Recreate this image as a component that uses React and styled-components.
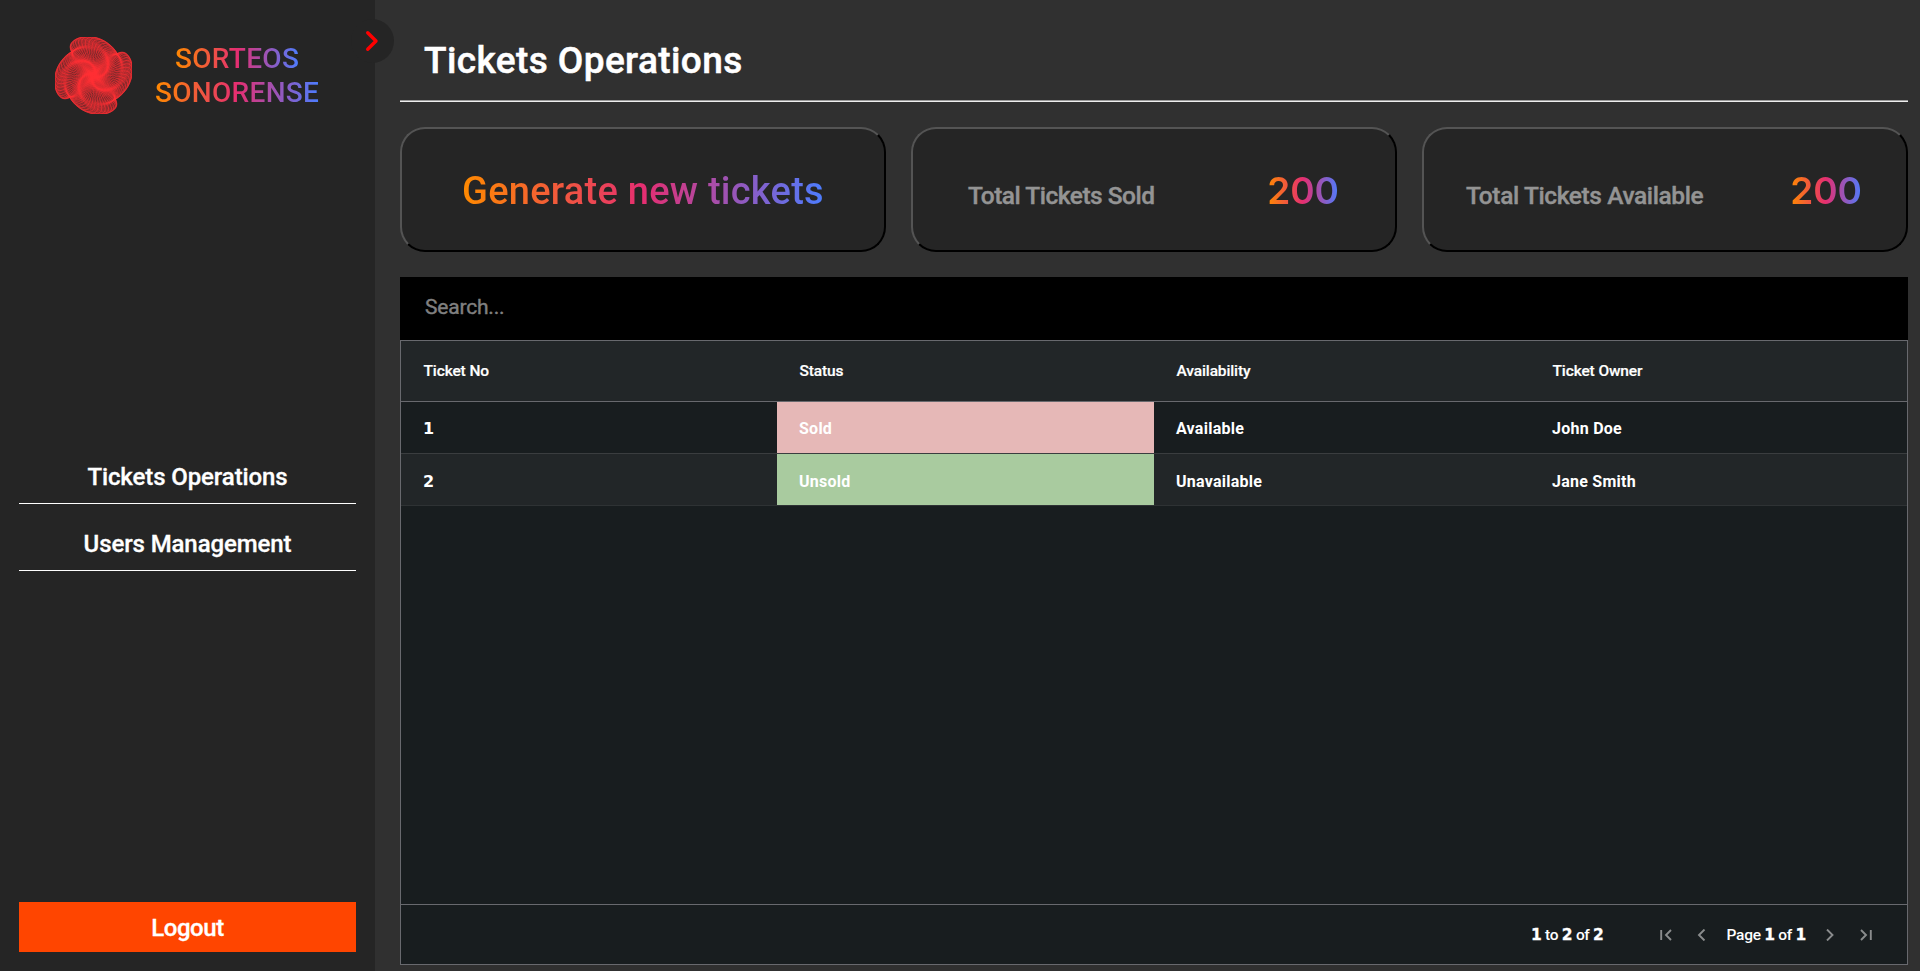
import React from "react";
import styled, { createGlobalStyle } from "styled-components";

const Global = createGlobalStyle`
  *{box-sizing:border-box}
  body{margin:0;background:#303030;color:#fff;font-family:Roboto,"Liberation Sans",sans-serif;font-weight:500;overflow:hidden}
`;

const gradient = "linear-gradient(to right, #ff8a00, #e52e71 50%, #4c7dff)";

const Page = styled.div`
  display: flex;
  height: 971px;
  width: 1920px;
`;
const Sidebar = styled.aside`
  position: relative;
  width: 375px;
  padding: 37px 19px 19px;
  background: #252525;
  display: flex;
  flex-direction: column;
  justify-content: space-between;
`;
const Toggle = styled.button`
  position: absolute;
  top: 19px;
  right: -19px;
  width: 43px;
  height: 44px;
  padding: 0 2px 0 0;
  border: 0;
  border-radius: 50%;
  background: #252525;
  display: flex;
  align-items: center;
  justify-content: center;
`;
const Brand = styled.div`
  display: flex;
  align-items: center;
  padding-left: 36px;
  gap: 23px;
`;
const Gradient = styled.span`
  display: block;
  width: max-content;
  background: ${gradient};
  background-clip: text;
  -webkit-background-clip: text;
  color: transparent;
  white-space: nowrap;
`;
const BrandName = styled.div`
  display: flex;
  flex-direction: column;
  align-items: center;
  font-size: 28px;
  line-height: 34px;
  letter-spacing: 0.3px;
`;
const Nav = styled.nav`
  display: flex;
  flex-direction: column;
  margin-bottom: 9px;
`;
const NavItem = styled.a`
  height: 67px;
  padding-top: 26.5px;
  border-bottom: 1px solid #fff;
  text-align: center;
  font-size: 24px;
  line-height: 28px;
  letter-spacing: -0.1px;
  -webkit-text-stroke: 0.3px;
`;
const Logout = styled.button`
  height: 50px;
  border: 0;
  background: #ff4500;
  color: #fff;
  padding-top: 3px;
  font: 500 24px Roboto, sans-serif;
  letter-spacing: -0.4px;
  -webkit-text-stroke: 0.3px;
`;
const Main = styled.main`
  flex: 1;
  padding: 0 12px 6px 25px;
  display: flex;
  flex-direction: column;
`;
const Title = styled.h1`
  margin: 0;
  height: 102px;
  padding: 39px 0 0 24px;
  font-size: 37px;
  line-height: 44px;
  font-weight: 500;
  letter-spacing: 0.4px;
  -webkit-text-stroke: 0.5px;
  border-bottom: 1px solid #eee;
  box-shadow: inset 0 -1px #9a9a9a;
`;
const Cards = styled.div`
  display: grid;
  grid-template-columns: repeat(3, 1fr);
  gap: 25px;
  height: 125px;
  margin: 25px 0;
`;
const Card = styled.section`
  border: 2px solid #000;
  border-color: #545454 #000 #000 #545454;
  border-radius: 25px;
  background: #252525;
  display: flex;
  align-items: baseline;
  justify-content: ${(p) => (p.$center ? "center" : "space-between")};
  padding: ${(p) => p.$pad || "0"};
  padding-top: 39px;
`;
const CardLabel = styled.span`
  font-size: 24.5px;
  color: #949494;
  letter-spacing: ${(p) => p.$ls}px;
  -webkit-text-stroke: 0.4px;
`;
const CardAction = styled(Gradient)`
  font-size: 38px;
  line-height: 46px;
  letter-spacing: 0.25px;
`;
const CardValue = styled(Gradient)`
  font: 600 37px/46px Inter, sans-serif;
`;
const Search = styled.input`
  height: 63px;
  flex: none;
  border: 0;
  background: #000;
  padding: 0 25px 3px;
  font: 400 21px Roboto, sans-serif;
  letter-spacing: -0.2px;
  &::placeholder {
    color: #808080;
    opacity: 1;
    -webkit-text-stroke: 0.4px;
  }
`;
const Grid = styled.div`
  flex: 1;
  border: 1px solid #68696e;
  background: #181d1f;
  display: flex;
  flex-direction: column;
`;
const Cell = styled.div`
  display: flex;
  align-items: center;
  padding-left: 22px;
  background: ${(p) => p.$bg || "none"};
`;
const NumberCell = styled(Cell)`
  font-family: "DejaVu Sans", sans-serif;
`;
const Row = styled.div`
  display: grid;
  grid-template-columns: 376px 377px 376px 1fr;
  height: 52px;
  font-size: 16px;
  font-weight: 700;
  letter-spacing: 0.25px;
  background: ${(p) => (p.$alt ? "#222628" : "#181d1f")};
  border-bottom: 1px solid ${(p) => (p.$alt ? "#2e3234" : "#3a3d3f")};
  ${Cell} {
    padding-top: ${(p) => (p.$alt ? 4 : 2)}px;
  }
`;
const HeadRow = styled(Row)`
  height: 61px;
  font-size: 15.5px;
  font-weight: 500;
  letter-spacing: -0.12px;
  background: #222628;
  border-bottom-color: #68696e;
  -webkit-text-stroke: 0.2px;
  ${Cell} {
    padding-top: 0;
    padding-left: 22.5px;
  }
`;
const Footer = styled.div`
  margin-top: auto;
  height: 60px;
  border-top: 1px solid #68696e;
  display: flex;
  align-items: center;
  justify-content: flex-end;
  padding-right: 35px;
  font-size: 15.5px;
  letter-spacing: -0.3px;
  b {
    font: 700 15.5px "DejaVu Sans", sans-serif;
    -webkit-text-stroke: 0.3px;
  }
`;
const Summary = styled.span`
  margin-right: 56px;
`;
const PageInfo = styled.span`
  margin: 0 17px 0 19px;
`;
const PageIcon = styled.svg`
  width: 12px;
  height: 12px;
  margin-left: ${(p) => p.$gap || 0}px;
  fill: none;
  stroke: #8a8c8d;
  stroke-width: 1.9;
`;

// Rosette: twisted loops through the centre, bunched four-fold.
const LOOPS = 104;
const loops = Array.from({ length: LOOPS }, (_, k) => {
  const t = (k / LOOPS) * Math.PI * 2;
  const a = t - 0.15 * Math.cos(4 * t);
  const len = 36 + 4.4 * Math.cos(4 * t);
  const pts = [];
  for (let i = 0; i <= 48; i++) {
    const u = (i / 48) * Math.PI * 2;
    const x = (len / 2) * (1 - Math.cos(u));
    const y = 15 * Math.sin(u);
    const r = Math.hypot(x, y);
    const th = Math.atan2(y, x) + a - 0.26 + 1.3 * (1 - r / 40);
    pts.push(`${(37.5 + r * Math.cos(th)).toFixed(2)},${(37.5 + r * Math.sin(th)).toFixed(2)}`);
  }
  return pts.join(" ");
});

const Logo = () => (
  <svg width="77" height="77" viewBox="-1 -1 77 77" fill="none" stroke="#ff3034" strokeWidth=".68" strokeOpacity=".9">
    {loops.map((p, i) => (
      <polygon key={i} points={p} />
    ))}
  </svg>
);

const rows = [
  ["1", "Sold", "Available", "John Doe"],
  ["2", "Unsold", "Unavailable", "Jane Smith"],
];
const statusColor = { Sold: "#e6b8b7", Unsold: "#a9cb9f" };

export default function App() {
  return (
    <Page>
      <Global />
      <Sidebar>
        <Toggle>
          <svg width="14" height="22" viewBox="0 0 14 22" fill="none" stroke="#f00" strokeWidth="3.4" strokeLinecap="round" strokeLinejoin="round">
            <path d="M2.7 2.7 11 11 2.7 19.3" />
          </svg>
        </Toggle>
        <Brand>
          <Logo />
          <BrandName>
            <Gradient>SORTEOS</Gradient>
            <Gradient>SONORENSE</Gradient>
          </BrandName>
        </Brand>
        <Nav>
          <NavItem>Tickets Operations</NavItem>
          <NavItem>Users Management</NavItem>
        </Nav>
        <Logout>Logout</Logout>
      </Sidebar>
      <Main>
        <Title>Tickets Operations</Title>
        <Cards>
          <Card $center>
            <CardAction>Generate new tickets</CardAction>
          </Card>
          <Card $pad="0 56px 0 55px">
            <CardLabel $ls={-0.5}>Total Tickets Sold</CardLabel>
            <CardValue>200</CardValue>
          </Card>
          <Card $pad="0 44px 0 42px">
            <CardLabel $ls={-0.4}>Total Tickets Available</CardLabel>
            <CardValue>200</CardValue>
          </Card>
        </Cards>
        <Search placeholder="Search..." />
        <Grid>
          <HeadRow>
            {["Ticket No", "Status", "Availability", "Ticket Owner"].map((h) => (
              <Cell key={h}>{h}</Cell>
            ))}
          </HeadRow>
          {rows.map(([no, ...rest], i) => (
            <Row key={no} $alt={i % 2 === 1}>
              <NumberCell>{no}</NumberCell>
              {rest.map((c) => (
                <Cell key={c} $bg={statusColor[c]}>{c}</Cell>
              ))}
            </Row>
          ))}
          <Footer>
            <Summary><b>1</b> to <b>2</b> of <b>2</b></Summary>
            <PageIcon viewBox="0 0 12 12"><path d="M1.2 1v10M11 1 6 6l5 5" /></PageIcon>
            <PageIcon $gap={24} viewBox="0 0 12 12"><path d="M8.5.5 3 6l5.5 5.5" /></PageIcon>
            <PageInfo>Page <b>1</b> of <b>1</b></PageInfo>
            <PageIcon viewBox="0 0 12 12"><path d="M4 .5 9.5 6 4 11.5" /></PageIcon>
            <PageIcon $gap={25} viewBox="0 0 12 12"><path d="M10.8 1v10M1 1l5 5-5 5" /></PageIcon>
          </Footer>
        </Grid>
      </Main>
    </Page>
  );
}
